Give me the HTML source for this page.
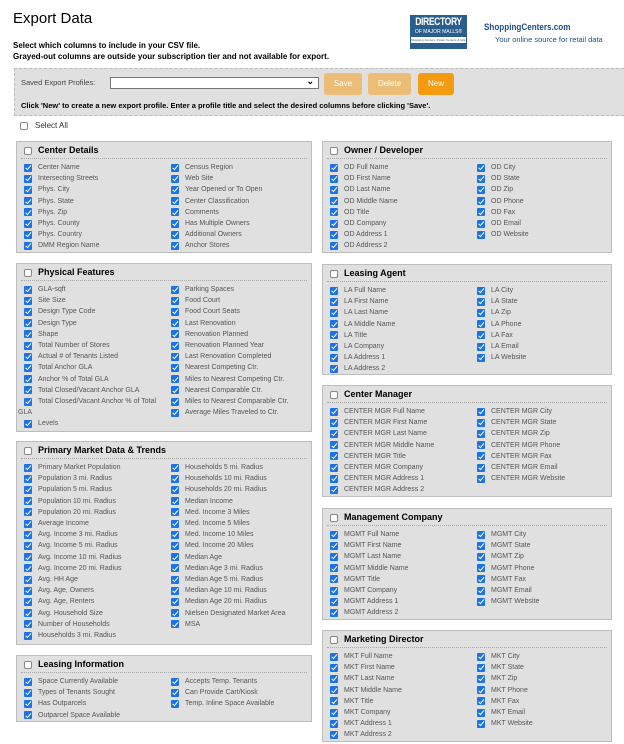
<!DOCTYPE html>
<html><head><meta charset="utf-8"><style>
*{box-sizing:border-box;margin:0;padding:0}
body{width:624px;height:744px;background:#fff;font-family:"Liberation Sans",sans-serif;position:relative;overflow:hidden;color:#000}
.abs{position:absolute}
.p{position:absolute;background:#e0e0e0;border:1px solid #bdbdbd}
.p .h{height:17px;border-bottom:1px dotted #a8a8a8;margin:0 4px;position:relative}
.p .h b{position:absolute;left:17px;top:3px;font-size:9px;font-weight:bold}
.ec{position:absolute;width:8px;height:8px;background:#fff;border:1px solid #888;border-radius:2px}
.p .h .ec{left:3px;top:5px}
.col{position:absolute;top:20px;font-size:7px;line-height:11.2px;color:#555}
.col div{position:relative;padding-left:20px}
.col div.w{padding-left:0;text-indent:20px}
.col div.w i{left:6px}
.col i{position:absolute;left:6px;top:1.5px;width:8px;height:8px;background:#1a73e8;border-radius:1px}
.col i:after{content:"";position:absolute;left:2.5px;top:0.5px;width:2px;height:4.5px;border:solid #fff;border-width:0 1.3px 1.3px 0;transform:rotate(40deg)}
.c1{left:1px;width:148px}.c2{left:148px;width:140px}
.btn{position:absolute;top:73px;height:22px;border-radius:3px;color:#fff;font-size:8px;text-align:center;line-height:22px}
</style></head><body>
<div class="abs" style="left:13px;top:10px;font-size:15px">Export Data</div>
<div class="abs" style="left:13px;top:40px;font-size:8px;font-weight:bold;line-height:11px">Select which columns to include in your CSV file.<br>Grayed-out columns are outside your subscription tier and not available for export.</div>
<div class="abs" style="left:410px;top:15px;width:57px;height:34px;background:#2a5e8c;color:#fff;text-align:center;overflow:hidden">
<div style="font-size:11px;font-weight:bold;line-height:14px;letter-spacing:-0.5px;transform:scaleX(.78);white-space:nowrap;margin:0 -10px">DIRECTORY</div>
<div style="font-size:5px;line-height:7px;white-space:nowrap">OF MAJOR MALLS®</div>
<div style="background:#fff;color:#2a5e8c;font-size:3px;line-height:6px;margin:1px;white-space:nowrap;overflow:hidden">Shopping Centers, Power Centers &amp; More</div></div>
<div class="abs" style="left:484px;top:22px;font-size:9px;font-weight:bold;color:#1d4f86;transform:scaleX(.9);transform-origin:left">ShoppingCenters.com</div>
<div class="abs" style="left:495px;top:35px;font-size:7.5px;color:#1d4f86">Your online source for retail data</div>
<div class="abs" style="left:14px;top:68px;width:610px;height:48px;background:#e0e0e0;border:1px dashed #bbb;border-right:none"></div>
<div class="abs" style="left:21px;top:78px;font-size:7.5px;color:#444">Saved Export Profiles:</div>
<div class="abs" style="left:110px;top:77px;width:209px;height:12px;background:#fff;border:1px solid #777"><span style="position:absolute;right:4px;top:-2px;font-size:9px;font-weight:bold">&#8964;</span></div>
<div class="btn" style="left:324px;width:38px;background:#ebbd77">Save</div>
<div class="btn" style="left:368px;width:43px;background:#ebbd77">Delete</div>
<div class="btn" style="left:418px;width:36px;background:#f39c12">New</div>
<div class="abs" style="left:21px;top:101px;font-size:7.5px;font-weight:bold">Click 'New' to create a new export profile. Enter a profile title and select the desired columns before clicking 'Save'.</div>
<div class="ec" style="left:20px;top:122px"></div>
<div class="abs" style="left:35px;top:121px;font-size:8px;color:#333">Select All</div>

<div class="p" style="left:16px;top:141px;width:296px;height:112px"><div class="h"><span class="ec"></span><b>Center Details</b></div>
<div class="col c1"><div><i></i>Center Name</div><div><i></i>Intersecting Streets</div><div><i></i>Phys. City</div><div><i></i>Phys. State</div><div><i></i>Phys. Zip</div><div><i></i>Phys. County</div><div><i></i>Phys. Country</div><div><i></i>DMM Region Name</div></div>
<div class="col c2"><div><i></i>Census Region</div><div><i></i>Web Site</div><div><i></i>Year Opened or To Open</div><div><i></i>Center Classification</div><div><i></i>Comments</div><div><i></i>Has Multiple Owners</div><div><i></i>Additional Owners</div><div><i></i>Anchor Stores</div></div></div>

<div class="p" style="left:16px;top:263px;width:296px;height:169px"><div class="h"><span class="ec"></span><b>Physical Features</b></div>
<div class="col c1"><div><i></i>GLA-sqft</div><div><i></i>Site Size</div><div><i></i>Design Type Code</div><div><i></i>Design Type</div><div><i></i>Shape</div><div><i></i>Total Number of Stores</div><div><i></i>Actual # of Tenants Listed</div><div><i></i>Total Anchor GLA</div><div><i></i>Anchor % of Total GLA</div><div><i></i>Total Closed/Vacant Anchor GLA</div><div class="w"><i></i>Total Closed/Vacant Anchor % of Total GLA</div><div><i></i>Levels</div></div>
<div class="col c2"><div><i></i>Parking Spaces</div><div><i></i>Food Court</div><div><i></i>Food Court Seats</div><div><i></i>Last Renovation</div><div><i></i>Renovation Planned</div><div><i></i>Renovation Planned Year</div><div><i></i>Last Renovation Completed</div><div><i></i>Nearest Competing Ctr.</div><div><i></i>Miles to Nearest Competing Ctr.</div><div><i></i>Nearest Comparable Ctr.</div><div><i></i>Miles to Nearest Comparable Ctr.</div><div><i></i>Average Miles Traveled to Ctr.</div></div></div>

<div class="p" style="left:16px;top:441px;width:296px;height:204px"><div class="h"><span class="ec"></span><b>Primary Market Data &amp; Trends</b></div>
<div class="col c1"><div><i></i>Primary Market Population</div><div><i></i>Population 3 mi. Radius</div><div><i></i>Population 5 mi. Radius</div><div><i></i>Population 10 mi. Radius</div><div><i></i>Population 20 mi. Radius</div><div><i></i>Average Income</div><div><i></i>Avg. Income 3 mi. Radius</div><div><i></i>Avg. Income 5 mi. Radius</div><div><i></i>Avg. Income 10 mi. Radius</div><div><i></i>Avg. Income 20 mi. Radius</div><div><i></i>Avg. HH Age</div><div><i></i>Avg. Age, Owners</div><div><i></i>Avg. Age, Renters</div><div><i></i>Avg. Household Size</div><div><i></i>Number of Households</div><div><i></i>Households 3 mi. Radius</div></div>
<div class="col c2"><div><i></i>Households 5 mi. Radius</div><div><i></i>Households 10 mi. Radius</div><div><i></i>Households 20 mi. Radius</div><div><i></i>Median Income</div><div><i></i>Med. Income 3 Miles</div><div><i></i>Med. Income 5 Miles</div><div><i></i>Med. Income 10 Miles</div><div><i></i>Med. Income 20 Miles</div><div><i></i>Median Age</div><div><i></i>Median Age 3 mi. Radius</div><div><i></i>Median Age 5 mi. Radius</div><div><i></i>Median Age 10 mi. Radius</div><div><i></i>Median Age 20 mi. Radius</div><div><i></i>Nielsen Designated Market Area</div><div><i></i>MSA</div></div></div>

<div class="p" style="left:16px;top:655px;width:296px;height:67px"><div class="h"><span class="ec"></span><b>Leasing Information</b></div>
<div class="col c1"><div><i></i>Space Currently Available</div><div><i></i>Types of Tenants Sought</div><div><i></i>Has Outparcels</div><div><i></i>Outparcel Space Available</div></div>
<div class="col c2"><div><i></i>Accepts Temp. Tenants</div><div><i></i>Can Provide Cart/Kiosk</div><div><i></i>Temp. Inline Space Available</div></div></div>

<div class="p" style="left:322px;top:141px;width:290px;height:112px"><div class="h"><span class="ec"></span><b>Owner / Developer</b></div>
<div class="col c1"><div><i></i>OD Full Name</div><div><i></i>OD First Name</div><div><i></i>OD Last Name</div><div><i></i>OD Middle Name</div><div><i></i>OD Title</div><div><i></i>OD Company</div><div><i></i>OD Address 1</div><div><i></i>OD Address 2</div></div>
<div class="col c2"><div><i></i>OD City</div><div><i></i>OD State</div><div><i></i>OD Zip</div><div><i></i>OD Phone</div><div><i></i>OD Fax</div><div><i></i>OD Email</div><div><i></i>OD Website</div></div></div>

<div class="p" style="left:322px;top:264px;width:290px;height:111px"><div class="h"><span class="ec"></span><b>Leasing Agent</b></div>
<div class="col c1"><div><i></i>LA Full Name</div><div><i></i>LA First Name</div><div><i></i>LA Last Name</div><div><i></i>LA Middle Name</div><div><i></i>LA Title</div><div><i></i>LA Company</div><div><i></i>LA Address 1</div><div><i></i>LA Address 2</div></div>
<div class="col c2"><div><i></i>LA City</div><div><i></i>LA State</div><div><i></i>LA Zip</div><div><i></i>LA Phone</div><div><i></i>LA Fax</div><div><i></i>LA Email</div><div><i></i>LA Website</div></div></div>

<div class="p" style="left:322px;top:385px;width:290px;height:112px"><div class="h"><span class="ec"></span><b>Center Manager</b></div>
<div class="col c1"><div><i></i>CENTER MGR Full Name</div><div><i></i>CENTER MGR First Name</div><div><i></i>CENTER MGR Last Name</div><div><i></i>CENTER MGR Middle Name</div><div><i></i>CENTER MGR Title</div><div><i></i>CENTER MGR Company</div><div><i></i>CENTER MGR Address 1</div><div><i></i>CENTER MGR Address 2</div></div>
<div class="col c2"><div><i></i>CENTER MGR City</div><div><i></i>CENTER MGR State</div><div><i></i>CENTER MGR Zip</div><div><i></i>CENTER MGR Phone</div><div><i></i>CENTER MGR Fax</div><div><i></i>CENTER MGR Email</div><div><i></i>CENTER MGR Website</div></div></div>

<div class="p" style="left:322px;top:508px;width:290px;height:112px"><div class="h"><span class="ec"></span><b>Management Company</b></div>
<div class="col c1"><div><i></i>MGMT Full Name</div><div><i></i>MGMT First Name</div><div><i></i>MGMT Last Name</div><div><i></i>MGMT Middle Name</div><div><i></i>MGMT Title</div><div><i></i>MGMT Company</div><div><i></i>MGMT Address 1</div><div><i></i>MGMT Address 2</div></div>
<div class="col c2"><div><i></i>MGMT City</div><div><i></i>MGMT State</div><div><i></i>MGMT Zip</div><div><i></i>MGMT Phone</div><div><i></i>MGMT Fax</div><div><i></i>MGMT Email</div><div><i></i>MGMT Website</div></div></div>

<div class="p" style="left:322px;top:630px;width:290px;height:112px"><div class="h"><span class="ec"></span><b>Marketing Director</b></div>
<div class="col c1"><div><i></i>MKT Full Name</div><div><i></i>MKT First Name</div><div><i></i>MKT Last Name</div><div><i></i>MKT Middle Name</div><div><i></i>MKT Title</div><div><i></i>MKT Company</div><div><i></i>MKT Address 1</div><div><i></i>MKT Address 2</div></div>
<div class="col c2"><div><i></i>MKT City</div><div><i></i>MKT State</div><div><i></i>MKT Zip</div><div><i></i>MKT Phone</div><div><i></i>MKT Fax</div><div><i></i>MKT Email</div><div><i></i>MKT Website</div></div></div>
</body></html>
